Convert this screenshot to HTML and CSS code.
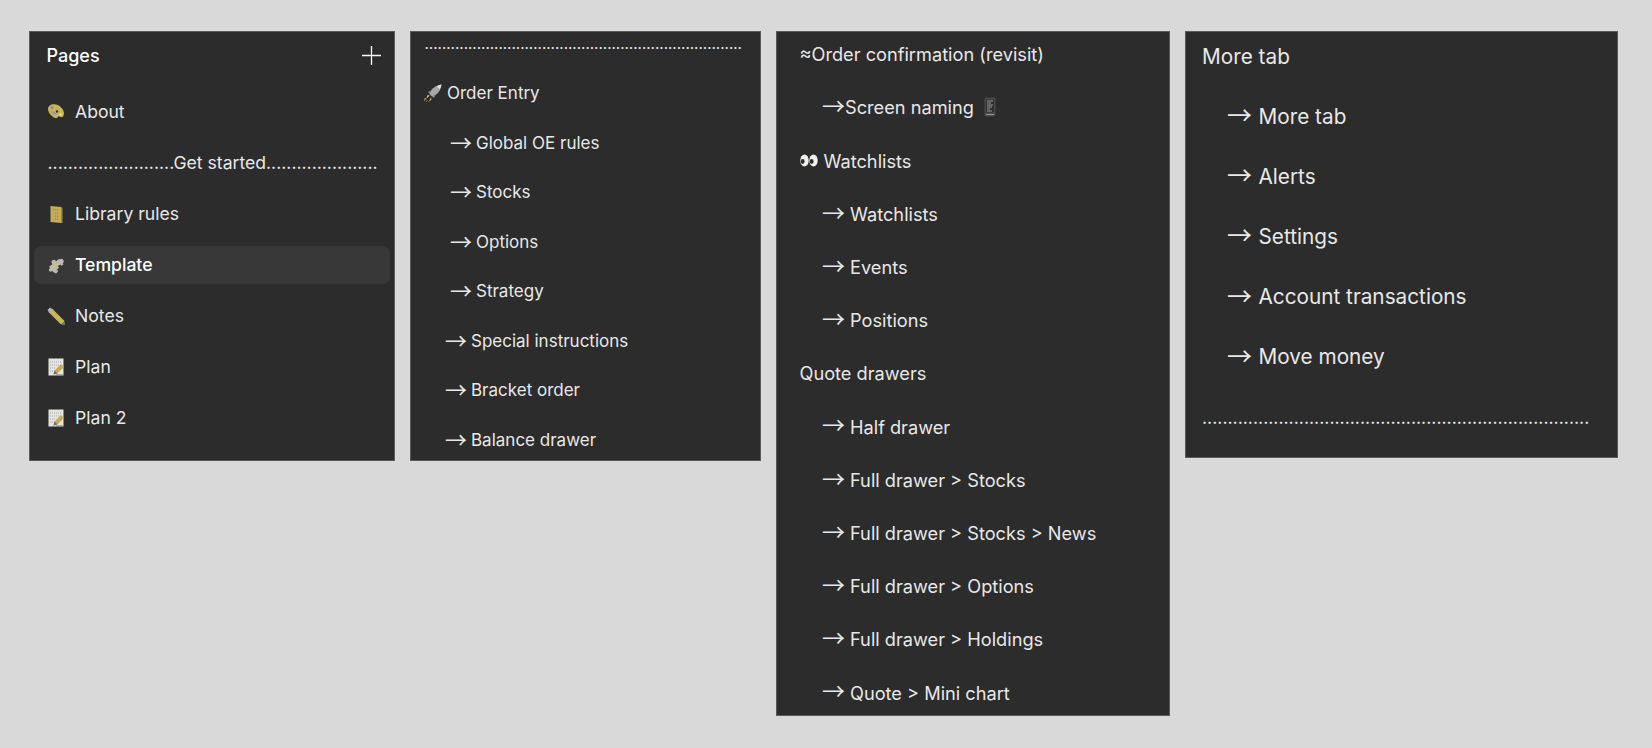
FILE: index.html
```html
<!DOCTYPE html>
<html lang="en">
<head>
  <meta charset="UTF-8">
  <meta name="viewport" content="width=device-width, initial-scale=1">
  <title>Pages</title>
  <link rel="stylesheet" href="styles.css">
</head>
<body>
  <svg class="defs" width="0" height="0" aria-hidden="true">
    <symbol id="memo" viewBox="0 0 18 18">
      <rect x="1.500" y="0.500" width="15" height="17" fill="#e4e4e0"/>
      <path d="M3 4h11M3 7h9M3 10h5M3 13h4" stroke="#a9a9a6" stroke-width="1" stroke-dasharray="1 1"/>
      <path d="M16 17.500H9v-1h7z" fill="#777"/>
      <path d="M14 6l3 3-6.500 6.500-4 1 1-4z" fill="#c4ae55"/>
      <path d="M7.500 12.500l-1 4 4-1z" fill="#6f6f68"/>
    </symbol>
  </svg>

  <section class="panel panel-pages">
    <header class="pages-head">
      <span>Pages</span>
      <svg class="plus" width="19" height="19" viewBox="0 0 19 19"><path d="M9.500 0v19M0 9.500h19" stroke="#fff" stroke-width="1.300"/></svg>
    </header>
    <ul class="list">
      <li class="row">
        <svg class="ico" viewBox="0 0 18 18">
          <path d="M1 6c0-3.500 4-5.500 8-4.500 4.500 1 8 5 8 9 0 3-2 4.500-3.500 3.500-1.500-1-2-1-3 .5-1 1.500-3.500.5-5.500-1.500C2.500 11 1 8.500 1 6z" fill="#c9b458"/>
          <circle cx="5" cy="4.500" r="1.500" fill="#8d8d86"/>
          <path d="M2.500 8l6 1.500 2 2.500-4-.5z" fill="#9a9a94"/>
          <circle cx="10" cy="8.500" r="1.200" fill="#333"/>
          <circle cx="13.500" cy="11.500" r="1.200" fill="#e6e0b8"/>
        </svg>
        <span class="label">About</span>
      </li>
      <li class="row row-rule">.........................Get started......................</li>
      <li class="row">
        <svg class="ico" viewBox="0 0 18 18">
          <path d="M3.500 1l10.500 1v16l-10.500-1z" fill="#c4ae55"/>
          <path d="M14 2l1.500 1v15H14z" fill="#8a8a84"/>
          <path d="M6 4.500l5 .5M8 8l4 .5M8 11l4 .5M8 14l4 .5" stroke="#8c7f45" stroke-width="1" stroke-dasharray="1 1"/>
        </svg>
        <span class="label">Library rules</span>
      </li>
      <li class="row is-active">
        <svg class="ico" viewBox="0 0 18 18">
          <g transform="rotate(-38 9 9)">
            <rect x="2.500" y="6" width="13" height="7" fill="#b9b9b4"/>
            <circle cx="15.500" cy="9.500" r="2.400" fill="#b9b9b4"/>
            <circle cx="9" cy="5.500" r="2.400" fill="#b9b9b4"/>
            <circle cx="5" cy="13.500" r="2.200" fill="#b9b9b4"/>
            <circle cx="1.800" cy="9.500" r="1.800" fill="#b9b9b4"/>
            <circle cx="11" cy="13" r="2" fill="#3a3a3a"/>
            <path d="M9 5v8M3 9.500h12" stroke="#d6c46a" stroke-width="1.200" stroke-dasharray="2 1"/>
          </g>
        </svg>
        <span class="label">Template</span>
      </li>
      <li class="row">
        <svg class="ico" viewBox="0 0 18 18">
          <path d="M5 1.500l12 12 .5 4-4-.5L1.500 5z" fill="#c9b458"/>
          <path d="M.5 3L3 .5l3 2L2.500 6z" fill="#b5b5b0"/>
          <path d="M14 17.500l3.500-3.500.5 4z" fill="#77776f"/>
        </svg>
        <span class="label">Notes</span>
      </li>
      <li class="row">
        <svg class="ico"><use href="#memo"/></svg>
        <span class="label">Plan</span>
      </li>
      <li class="row">
        <svg class="ico"><use href="#memo"/></svg>
        <span class="label">Plan 2</span>
      </li>
    </ul>
  </section>

  <section class="panel panel-order">
    <ul class="list">
      <li class="row row-rule">.........................................................................</li>
      <li class="row">
        <svg class="ico" viewBox="0 0 18 18">
          <path d="M17.500.5c-4.500.5-8 2.500-10.500 6L5.500 10l2.500 2.500 3.500-1.500c3.500-2.500 5.500-6 6-10.500z" fill="#a8a8a4"/>
          <path d="M17.500.5c-2 .5-3.500 1-4.500 2l2.500 2.500c1-1 1.500-2.500 2-4.500z" fill="#e4e4e0"/>
          <path d="M4 8l3-1.500-1.500 3.500zM10 14l1.500-3-3.500 1.500z" fill="#8a8a84"/>
          <path d="M3.500 11l2.500.5-3.500 3zM7 13.500l.5 2-3 2.500zM.5 14.500l2-1-2 4zM2 17l2-1-2 2z" fill="#d4bd52"/>
        </svg>
        <span class="label">Order Entry</span>
      </li>
      <li class="row step-a"><span class="arr">→</span>Global OE rules</li>
      <li class="row step-a"><span class="arr">→</span>Stocks</li>
      <li class="row step-a"><span class="arr">→</span>Options</li>
      <li class="row step-a"><span class="arr">→</span>Strategy</li>
      <li class="row step-b"><span class="arr">→</span>Special instructions</li>
      <li class="row step-b"><span class="arr">→</span>Bracket order</li>
      <li class="row step-b"><span class="arr">→</span>Balance drawer</li>
    </ul>
  </section>

  <section class="panel panel-flows">
    <ul class="list">
      <li class="row">≈Order confirmation (revisit)</li>
      <li class="row step step-tight"><span class="arr">→</span>Screen naming<svg class="phone" viewBox="0 0 12 20">
          <rect x="0.500" y="0.500" width="11" height="19" rx="1.500" fill="#4a4a4a"/>
          <rect x="2" y="2.500" width="8" height="13" fill="#2f2f2f"/>
          <path d="M3 4h6M3 6h4M3 8h6M3 10h5M3 12h3M3 14h5M2 17.500h8" stroke="#9a9a9a" stroke-width="1"/>
        </svg></li>
      <li class="row">
        <svg class="ico" viewBox="0 0 18 18">
          <ellipse cx="4.500" cy="8.500" rx="4.200" ry="6" fill="#f2f2f0"/>
          <ellipse cx="13.500" cy="8.500" rx="4.200" ry="6" fill="#f2f2f0"/>
          <ellipse cx="2.700" cy="9.500" rx="1.900" ry="2.400" fill="#2c2c2c"/>
          <ellipse cx="11.700" cy="9.500" rx="1.900" ry="2.400" fill="#2c2c2c"/>
        </svg>
        <span class="label">Watchlists</span>
      </li>
      <li class="row step"><span class="arr">→</span>Watchlists</li>
      <li class="row step"><span class="arr">→</span>Events</li>
      <li class="row step"><span class="arr">→</span>Positions</li>
      <li class="row">Quote drawers</li>
      <li class="row step"><span class="arr">→</span>Half drawer</li>
      <li class="row step"><span class="arr">→</span>Full drawer &gt; Stocks</li>
      <li class="row step"><span class="arr">→</span>Full drawer &gt; Stocks &gt; News</li>
      <li class="row step"><span class="arr">→</span>Full drawer &gt; Options</li>
      <li class="row step"><span class="arr">→</span>Full drawer &gt; Holdings</li>
      <li class="row step"><span class="arr">→</span>Quote &gt; Mini chart</li>
    </ul>
  </section>

  <section class="panel panel-more">
    <ul class="list">
      <li class="row">More tab</li>
      <li class="row step"><span class="arr">→</span>More tab</li>
      <li class="row step"><span class="arr">→</span>Alerts</li>
      <li class="row step"><span class="arr">→</span>Settings</li>
      <li class="row step"><span class="arr">→</span>Account transactions</li>
      <li class="row step"><span class="arr">→</span>Move money</li>
      <li class="row row-rule">............................................................................</li>
    </ul>
  </section>
</body>
</html>
```

FILE: styles.css
```css
* { margin: 0; padding: 0; box-sizing: border-box; }
body {
  font-family: 'Inter', 'Liberation Sans', sans-serif;
  background: #d9d9d9;
  color: #e8e8e8;
  height: 748px;
  overflow: hidden;
  padding: 31px 0 0 29px;
  display: flex;
  align-items: flex-start;
  gap: 15px;
}
.defs { position: absolute; }
.panel {
  background: #2c2c2c;
  box-shadow: inset 0 0 0 1px #5a5a5a;
  overflow: hidden;
  flex: none;
}
.list { list-style: none; display: flex; flex-direction: column; }
.row {
  display: flex;
  align-items: center;
  white-space: pre;
  flex: none;
}
.ico { width: 18px; height: 18px; flex: none; }
.arr {
  font-family: 'Noto Sans CJK JP', sans-serif;
  font-weight: 400;
  line-height: 1;
  text-align: center;
  margin-bottom: 3.500px;
  flex: none;
}

.panel-pages { width: 366px; height: 430px; font-size: 17.6px; }
.pages-head {
  height: 48px;
  padding: 0 14px 0 17.500px;
  display: flex;
  align-items: center;
  justify-content: space-between;
  font-weight: 500;
  font-size: 18px;
  color: #fff;
}
.panel-pages .list { margin: 13.800px 5px 0; gap: 13px; }
.panel-pages .row {
  height: 38px;
  padding-left: 13px;
  gap: 10px;
  border-radius: 7px;
}
.panel-pages .row-rule { padding-left: 13.500px; }
.is-active { background: #383838; font-weight: 500; color: #fff; }

.panel-order { width: 351px; height: 430px; font-size: 17px; }
.panel-order .list { padding-left: 14px; gap: 24.500px; }
.panel-order .row { height: 25px; gap: 5px; }
.panel-order .row-rule { padding-left: 0.500px; font-size: 15.100px; }
.panel-order .arr { font-size: 22px; width: 20px; }
.panel-order .step-a { padding-left: 26px; gap: 6px; }
.panel-order .step-b { padding-left: 21px; gap: 6px; }

.panel-flows { width: 394px; height: 685px; font-size: 18.200px; }
.panel-flows .list { padding-left: 23.500px; gap: 6.600px; }
.panel-flows .row { height: 46.600px; gap: 6px; }
.panel-flows .arr { font-size: 23px; width: 21px; }
.panel-flows .step { padding-left: 22.500px; gap: 7px; }
.panel-flows .step-tight { gap: 2px; }
.phone { width: 12px; height: 20px; margin-left: 8px; }

.panel-more { width: 433px; height: 427px; font-size: 20.750px; }
.panel-more .list { padding-left: 17px; gap: 10.200px; }
.panel-more .row { height: 50px; }
.panel-more .arr { font-size: 25px; width: 23px; }
.panel-more .step { padding-left: 25px; gap: 8.500px; }
.panel-more .row-rule { font-size: 17.700px; }
```
